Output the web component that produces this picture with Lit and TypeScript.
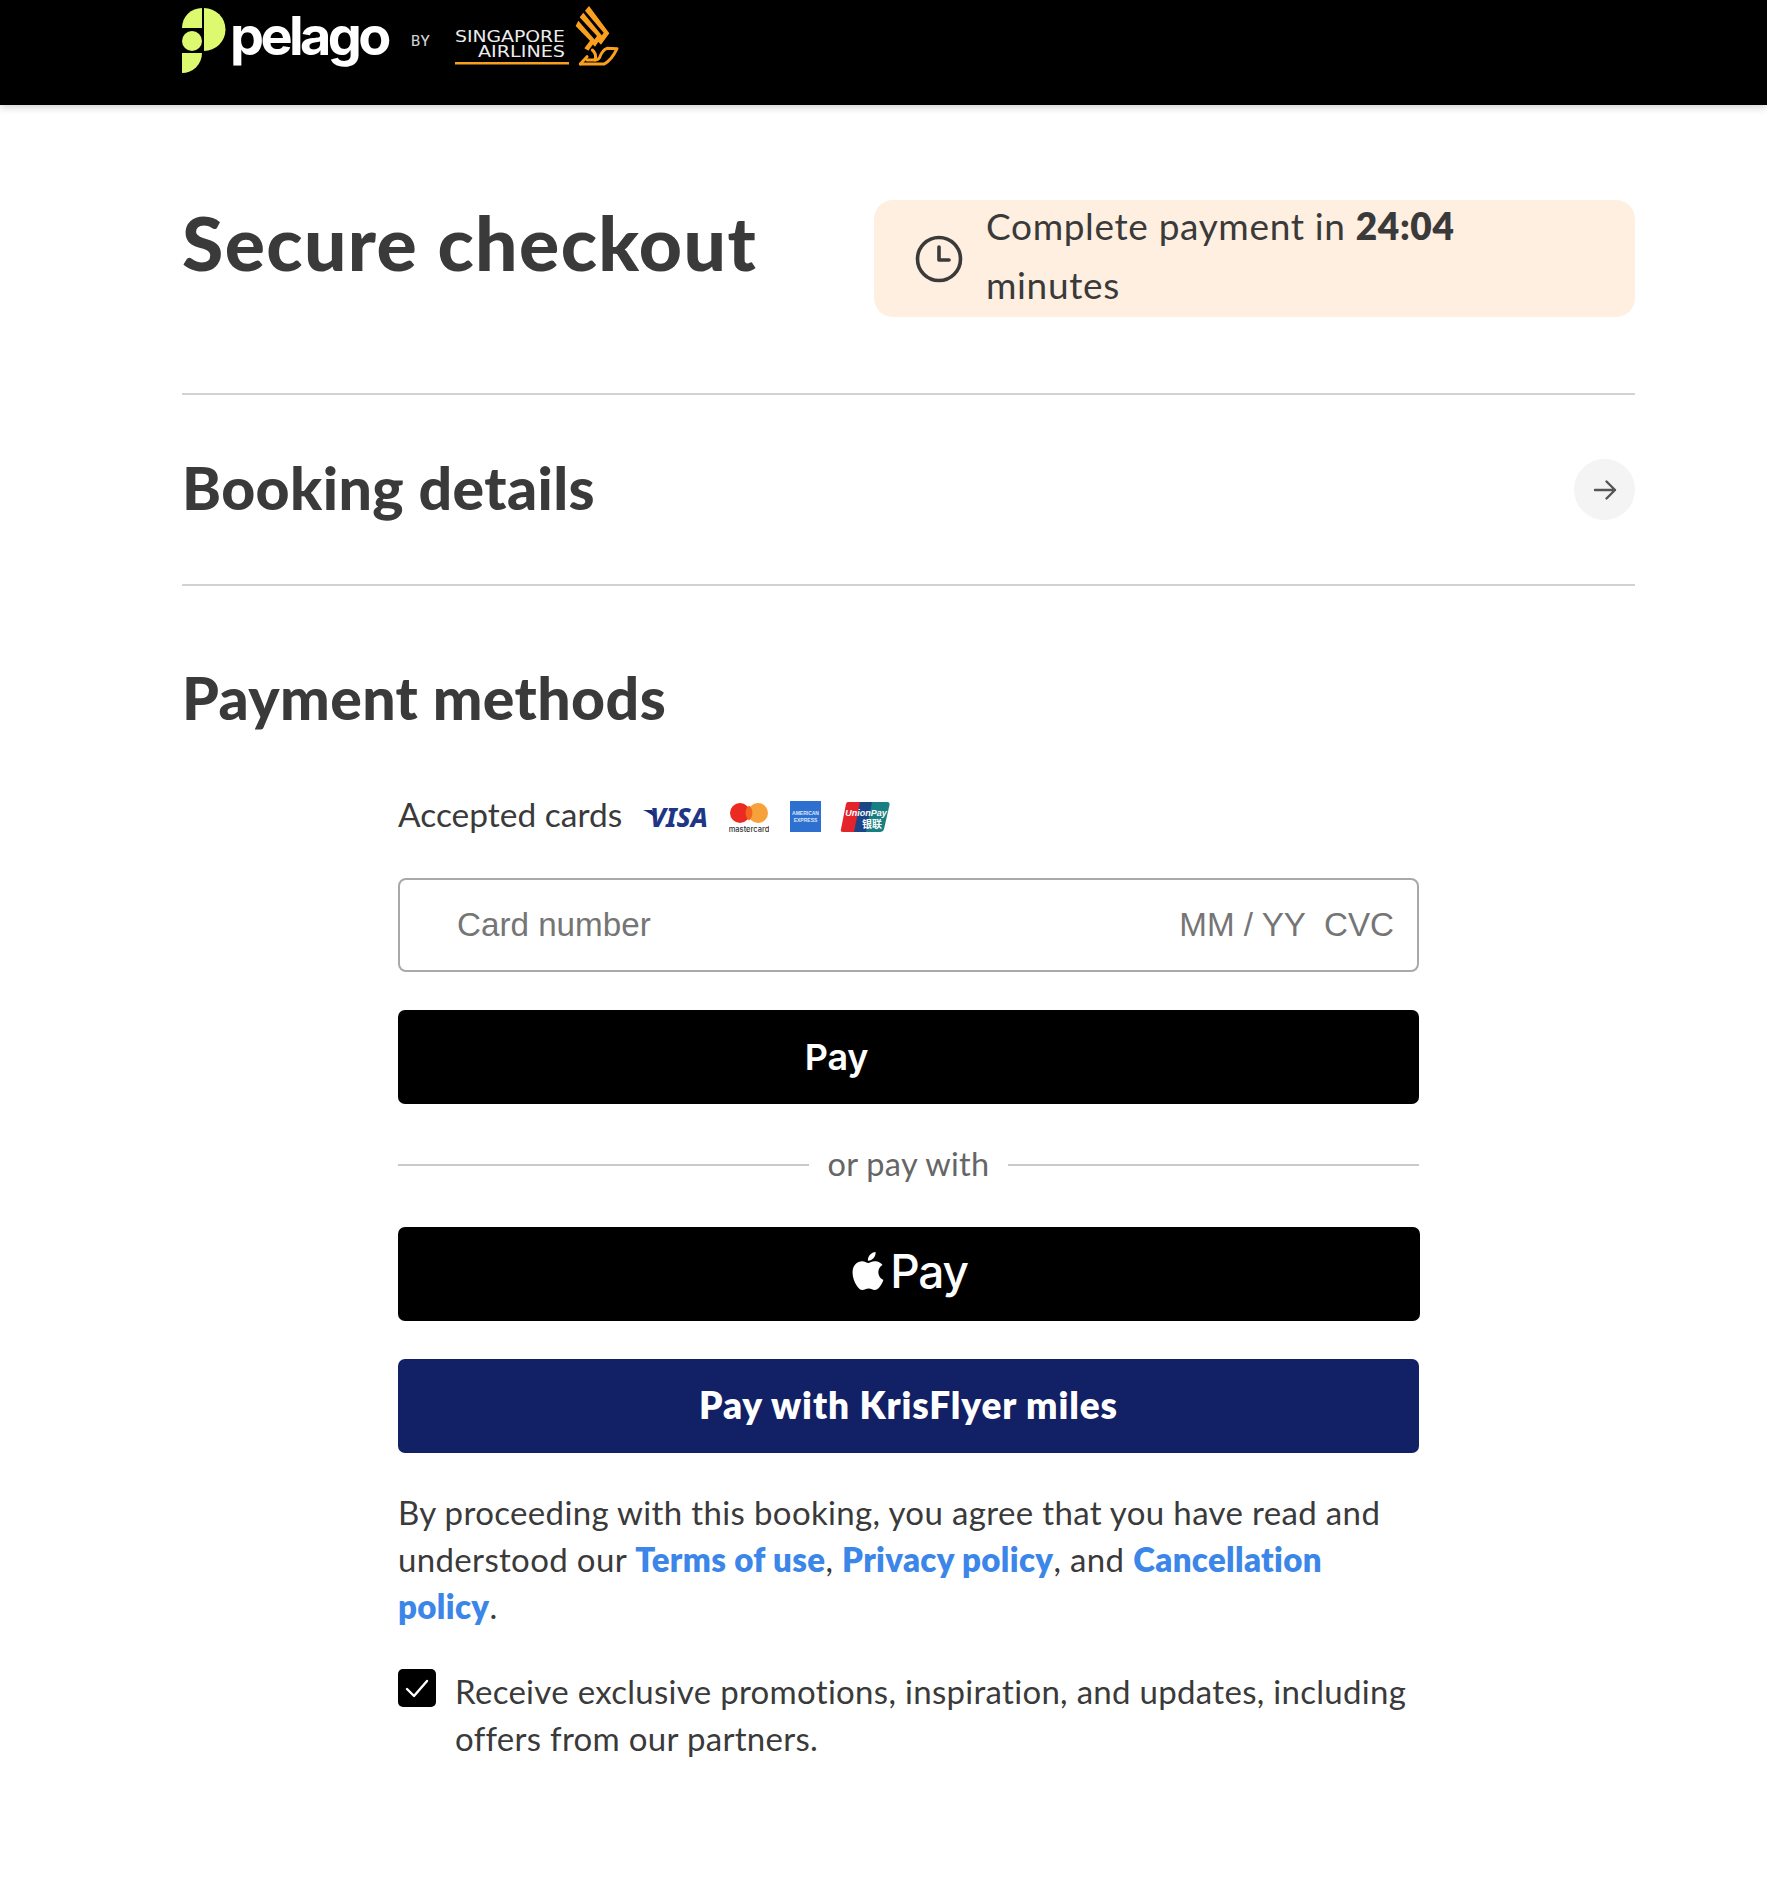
import { LitElement, html, css, svg } from "lit";
import { customElement } from "lit/decorators.js";

const logo = svg`<svg class="logo" width="440" height="74" viewBox="0 0 440 74">
  <g fill="#dcf970">
    <path d="M20 8 V28 H0 A20 20 0 0 1 20 8Z"/>
    <path d="M22 8 A21.5 21.5 0 0 1 22 51Z"/>
    <circle cx="10" cy="41" r="10"/>
    <path d="M0 53 H20 A20 20 0 0 1 0 73Z"/>
  </g>
  <text x="48" y="55" class="pel">pelago</text>
  <text x="229" y="46" class="by">BY</text>
  <text x="273" y="41.7" class="sq" textLength="110" lengthAdjust="spacingAndGlyphs">SINGAPORE</text>
  <text x="296" y="56.7" class="sq" textLength="87" lengthAdjust="spacingAndGlyphs">AIRLINES</text>
  <rect x="273" y="62" width="114" height="2.5" fill="#f99f1c"/>
  <g transform="translate(383 0) scale(0.3333)">
    <g fill="#f9a11f">
      <path d="M72 18 L133 100 L108 134 L98 124 L116 98 L60 32Z"/>
      <path d="M55 38 L112 108 L90 140 L80 130 L96 108 L44 52Z"/>
      <path d="M40 62 L92 122 L70 152 L58 145 L75 122 L32 78Z"/>
    </g>
    <g fill="none" stroke="#f9a11f" stroke-width="9" stroke-linejoin="round" stroke-linecap="round">
      <path d="M46 192 L118 192 Q140 180 156 146 L126 145 Q112 150 104 172 Q100 180 90 180 L66 180"/>
      <path d="M46 192 L66 170 M82 150 Q96 162 90 180"/>
    </g>
  </g>
</svg>`;

const visa = svg`<svg width="67" height="30" viewBox="0 0 67 30">
  <text x="8" y="26" class="visa" textLength="58" lengthAdjust="spacingAndGlyphs">VISA</text>
  <path d="M1 9 L10 9 L15 19 C11 14 6 11 1 9Z" fill="#1a2a72"/>
</svg>`;

const mastercard = svg`<svg width="40" height="36" viewBox="0 0 40 36">
  <circle cx="11" cy="12" r="10" fill="#eb2a22"/>
  <circle cx="29" cy="12" r="10" fill="#f6a139"/>
  <path d="M20 4.5 A10 10 0 0 1 20 19.5 A10 10 0 0 1 20 4.5Z" fill="#f4661f"/>
  <text x="20" y="31" text-anchor="middle" class="mc">mastercard</text>
</svg>`;

const amex = svg`<svg width="31" height="31" viewBox="0 0 31 31">
  <rect width="31" height="31" fill="#2e70d0"/>
  <text x="15.5" y="14" text-anchor="middle" class="ax">AMERICAN</text>
  <text x="15.5" y="21" text-anchor="middle" class="ax">EXPRESS</text>
</svg>`;

const unionpay = svg`<svg width="50" height="32" viewBox="0 0 50 32">
  <path d="M8 1 H24 L18 31 H3 Q0 31 1 28 L6 3 Q6.500 1 8 1Z" fill="#e3242b"/>
  <path d="M20 1 H36 L30 31 H14Z" fill="#1c4587"/>
  <path d="M32 1 H47 Q50 1 49.500 4 L44 28 Q43 31 40 31 H26Z" fill="#1a7f83"/>
  <text x="26" y="15" text-anchor="middle" class="up">UnionPay</text>
  <text x="32" y="27" text-anchor="middle" class="up2">银联</text>
</svg>`;

const apple = svg`<svg width="32" height="38" viewBox="0 0 814 1000" fill="#fff"><path d="M788 341c-6 4-108 62-108 190 0 148 130 200 134 202-1 3-21 72-69 142-43 62-88 123-156 123s-86-39-164-39c-76 0-103 41-165 41s-106-57-156-127C46 790 0 663 0 541c0-194 126-297 250-297 66 0 121 43 162 43 39 0 101-46 176-46 29 0 131 3 200 100zM555 159c31-37 53-88 53-139 0-7-1-14-2-20-51 2-111 34-147 75-28 32-55 83-55 135 0 8 1 16 2 18 3 1 8 1 13 1 45 0 103-31 136-70z"/></svg>`;

@customElement("app-root")
export class AppRoot extends LitElement {
  static styles = css`
    :host {
      display: block;
      width: 1767px;
      height: 1899px;
      background: #fff;
      color: #3a3a3a;
      font-family: "Lato", "Noto Sans", sans-serif;
      overflow: hidden;
    }
    .header {
      height: 105px;
      background: #000;
      box-shadow: 0 2px 8px rgba(0, 0, 0, 0.2);
      padding-left: 182px;
    }
    .logo { display: block; }
    .pel { font: 700 54px Inter, sans-serif; fill: #fff; letter-spacing: -3.6px; }
    .by { font: 500 14px Inter, sans-serif; fill: #d0d0d0; }
    .sq { font: 400 16.5px "DejaVu Sans", sans-serif; fill: #ececec; }
    .visa { font: italic 800 26px "Noto Sans", sans-serif; fill: #1f3585; }
    .mc { font: 500 7.5px Inter, sans-serif; fill: #333; }
    .ax { font: 700 5px "Liberation Sans", sans-serif; fill: #d9e6f8; }
    .up { font: italic 700 9px "Liberation Sans", sans-serif; fill: #fff; }
    .up2 { font: 700 10px "Noto Sans CJK SC", sans-serif; fill: #fff; }
    .main { padding: 95px 132px 0 182px; }
    .top {
      display: flex;
      align-items: center;
      justify-content: space-between;
      padding-bottom: 76px;
      border-bottom: 2px solid #d2d2d2;
    }
    h1 {
      margin: 0;
      font-size: 75px;
      line-height: 90px;
      font-weight: 900;
      letter-spacing: 1.4px;
      position: relative;
      top: -17px;
    }
    .timer {
      width: 761px;
      height: 117px;
      box-sizing: border-box;
      background: #ffefe0;
      border-radius: 19px;
      display: flex;
      align-items: center;
      gap: 23px;
      padding-left: 41px;
      font-size: 37px;
      line-height: 58.5px;
      letter-spacing: 0.65px;
    }
    .timer > div { position: relative; top: -3px; }
    .timer b { font-weight: 800; }
    .clock { flex: none; }
    .booking {
      height: 189px;
      display: flex;
      align-items: center;
      justify-content: space-between;
      border-bottom: 2px solid #d2d2d2;
    }
    h2 {
      margin: 0;
      font-size: 59px;
      line-height: 70px;
      font-weight: 900;
      letter-spacing: 0.4px;
    }
    .booking h2 { position: relative; top: -2px; }
    .arrow {
      width: 61px;
      height: 61px;
      border-radius: 50%;
      background: #f4f4f4;
      display: flex;
      align-items: center;
      justify-content: center;
    }
    .pay-title { margin-top: 77px; }
    .form { width: 1021px; margin: 61px 0 0 216px; }
    .accepted { display: flex; align-items: center; height: 40px; font-size: 33.5px; }
    .accepted .cards { display: flex; align-items: center; margin: 3px 0 0 20px; }
    .cards .mcw { margin-left: 20px; margin-top: 6px; display: flex; }
    .cards .axw { margin: 2px 0 0 21px; display: flex; }
    .cards .upw { margin: 2px 0 0 19px; display: flex; }
    .card-input {
      margin-top: 44px;
      height: 94px;
      box-sizing: border-box;
      border: 2px solid #a9a9a9;
      border-radius: 8px;
      display: flex;
      align-items: center;
      padding: 0 23px 0 57px;
      font: 400 33.2px "Liberation Sans", Arial, sans-serif;
      color: #757575;
      gap: 18px;
    }
    .card-input .num { flex: 1; }
    .btn {
      display: flex;
      align-items: center;
      justify-content: center;
      height: 94px;
      background: #000;
      color: #fff;
      border-radius: 7px;
    }
    .card-pay {
      margin-top: 38px;
      padding-right: 144px;
      font: 600 36px Inter, sans-serif;
      letter-spacing: -0.2px;
    }
    .or {
      display: flex;
      align-items: center;
      gap: 19px;
      height: 40px;
      margin-top: 41px;
      font-size: 32.5px;
      letter-spacing: 0.3px;
      color: #666;
    }
    .or span { position: relative; top: -2px; }
    .or i { flex: 1; height: 2px; background: #c9c9c9; }
    .apple {
      margin-top: 42px;
      width: 1022px;
      gap: 8px;
      font: 500 46px Inter, sans-serif;
      letter-spacing: -1.2px;
    }
    .apple span { position: relative; top: -3px; }
    .apple svg { position: relative; top: -3px; left: 2px; }
    .kris {
      margin-top: 38px;
      background: #122065;
      font-size: 37px;
      font-weight: 800;
      letter-spacing: 0.9px;
    }
    .kris span { position: relative; top: -2px; }
    .terms {
      margin: 36px 0 0;
      padding-right: 30px;
      font-size: 33px;
      line-height: 47px;
      letter-spacing: 0.35px;
    }
    .terms a { color: #3b86e8; font-weight: 800; text-decoration: none; }
    .promo {
      display: flex;
      gap: 19px;
      margin-top: 39px;
      font-size: 33px;
      line-height: 47px;
      letter-spacing: 0.3px;
    }
    .promo > div:last-child { position: relative; top: -1px; }
    .check {
      flex: none;
      width: 38px;
      height: 38px;
      background: #000;
      border-radius: 5px;
      display: flex;
      align-items: center;
      justify-content: center;
    }
  `;

  render() {
    return html`
      <div class="header">${logo}</div>
      <div class="main">
        <div class="top">
          <h1>Secure checkout</h1>
          <div class="timer">
            <svg class="clock" width="48" height="48" viewBox="0 0 48 48" fill="none" stroke="#3a3a3a" stroke-width="3.600" stroke-linecap="round" stroke-linejoin="round">
              <circle cx="24" cy="24" r="21.500"/><path d="M24 12 V25 H34"/>
            </svg>
            <div>Complete payment in <b>24:04</b><br />minutes</div>
          </div>
        </div>
        <div class="booking">
          <h2>Booking details</h2>
          <div class="arrow">
            <svg width="24" height="24" viewBox="0 0 24 24" fill="none" stroke="#555" stroke-width="2.400" stroke-linecap="round" stroke-linejoin="round"><path d="M2 12 H22 M13.500 3.500 L22 12 L13.500 20.500"/></svg>
          </div>
        </div>
        <h2 class="pay-title">Payment methods</h2>
        <div class="form">
          <div class="accepted">
            <span>Accepted cards</span>
            <div class="cards">
              ${visa}
              <span class="mcw">${mastercard}</span>
              <span class="axw">${amex}</span>
              <span class="upw">${unionpay}</span>
            </div>
          </div>
          <div class="card-input">
            <span class="num">Card number</span><span>MM / YY</span><span>CVC</span>
          </div>
          <div class="btn card-pay">Pay</div>
          <div class="or"><i></i><span>or pay with</span><i></i></div>
          <div class="btn apple">${apple}<span>Pay</span></div>
          <div class="btn kris"><span>Pay with KrisFlyer miles</span></div>
          <p class="terms">
            By proceeding with this booking, you agree that you have read and understood our
            <a>Terms of use</a>, <a>Privacy policy</a>, and <a>Cancellation policy</a>.
          </p>
          <div class="promo">
            <div class="check">
              <svg width="26" height="22" viewBox="0 0 26 22" fill="none" stroke="#fff" stroke-width="2.400" stroke-linecap="round" stroke-linejoin="round"><path d="M3 12 L10 19 L23 4"/></svg>
            </div>
            <div>Receive exclusive promotions, inspiration, and updates, including offers from our partners.</div>
          </div>
        </div>
      </div>
    `;
  }
}
